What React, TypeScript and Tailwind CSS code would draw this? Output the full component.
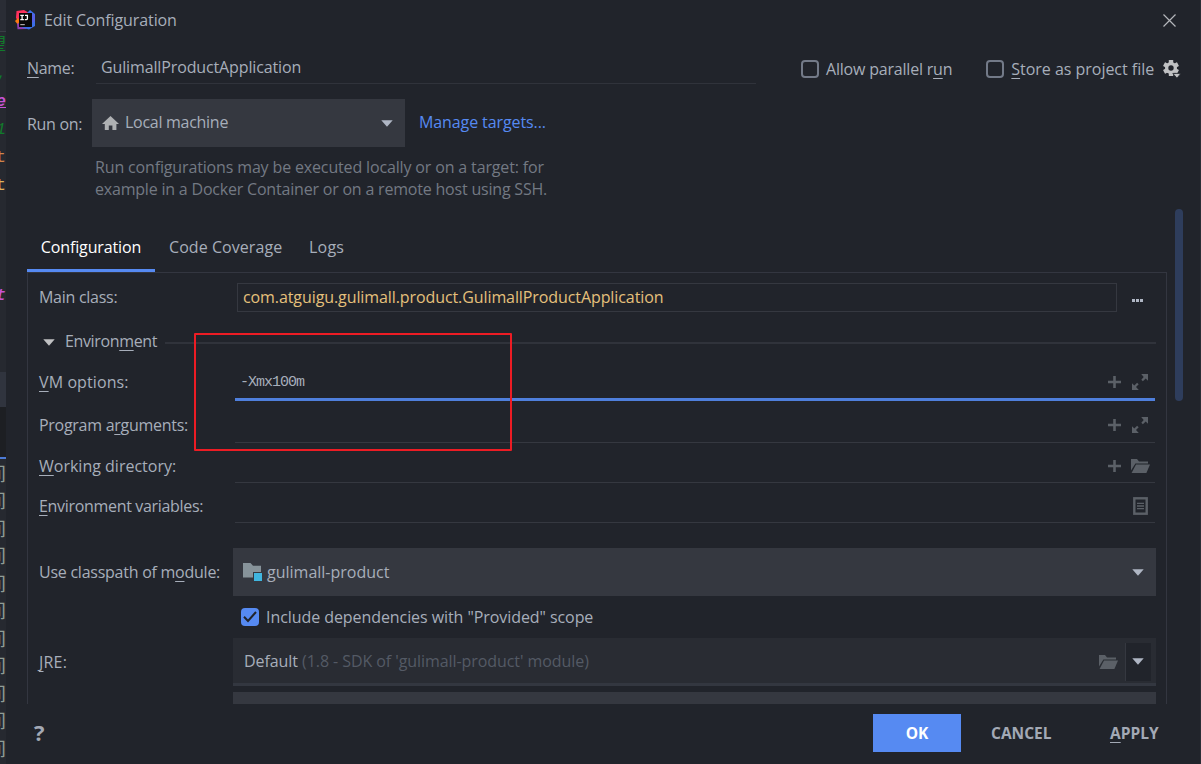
import type { ReactNode } from "react";

interface TextProps {
  text: string;
  className?: string;
}

/** Renders a label, underlining the character that follows the "&". */
function Mnemonic({ text, className = "" }: TextProps) {
  const at = text.indexOf("&");

  if (at < 0) {
    return <span className={`whitespace-pre ${className}`}>{text}</span>;
  }

  return (
    <span className={`whitespace-pre ${className}`}>
      {text.slice(0, at)}
      <span className="underline decoration-1 underline-offset-[3px] [text-decoration-skip-ink:none]">
        {text[at + 1]}
      </span>
      {text.slice(at + 2)}
    </span>
  );
}

function Logo() {
  return (
    <svg width="21" height="20" viewBox="0 0 21 20">
      <path d="M1.5 1 9 0l5 3-1 8H3L1 8z" fill="#fe315d" />
      <path d="m0 11 3-3 3 5-2.5 2.5z" fill="#f97a12" />
      <path d="m2 14 5-3 5 8-9.5.3z" fill="#8f3fae" />
      <path d="m12 3 3-3 5 4v12l-6 3.6-7-2 7-5z" fill="#3b6fe8" />
      <path d="M16 3l4 2v6l-4 3z" fill="#5560e4" />
      <rect x="4" y="3" width="13" height="14" fill="#090909" />
      <path
        d="M5.3 5.4h3.6M7.1 5.4v4.2M5.3 9.6h3.6M10 5.4h2.4v3q0 1.2-1.2 1.2h-1.4"
        stroke="#fff"
        strokeWidth="1.3"
        fill="none"
      />
      <path d="M5.3 14.6h4.5" stroke="#aaa" strokeWidth="1.2" />
    </svg>
  );
}

function CloseIcon() {
  return (
    <svg width="13" height="13" viewBox="0 0 13 13" stroke="#b4b6ba" strokeWidth="1.2">
      <path d="m.5.5 12 12M12.5.5l-12 12" />
    </svg>
  );
}

function HomeIcon() {
  return (
    <svg width="17" height="14" viewBox="0 0 17 14" fill="#afb1b3">
      <path d="M8.5 0 17 8h-2.6v6h-4V9.5H6.8V14h-4V8H0z" />
    </svg>
  );
}

function GearIcon() {
  return (
    <svg width="18" height="19" viewBox="0 0 18 19">
      <g fill="#c0c1c3">
        <rect x="5.8" y="0" width="4.4" height="16" rx=".6" />
        <rect x="5.8" y="0" width="4.4" height="16" rx=".6" transform="rotate(60 8 8)" />
        <rect x="5.8" y="0" width="4.4" height="16" rx=".6" transform="rotate(120 8 8)" />
        <circle cx="8" cy="8" r="6" />
      </g>
      <circle cx="8" cy="8" r="2.7" fill="#21242b" />
      <path d="M9.8 13.4h8L14 18.2z" fill="#c0c1c3" stroke="#21242b" strokeWidth=".8" />
    </svg>
  );
}

function Caret({ color = "#afb6c4" }: { color?: string }) {
  return (
    <svg width="12" height="7" viewBox="0 0 12 7" fill={color}>
      <path d="M.3.3h11.4L6 6.7z" />
    </svg>
  );
}

function PlusIcon() {
  return (
    <svg width="13" height="12" viewBox="0 0 13 12" fill="#5b6067">
      <path d="M5.2 0h2.6v4.7H13v2.6H7.8V12H5.2V7.3H0V4.7h5.2z" />
    </svg>
  );
}

function ExpandIcon() {
  return (
    <svg width="16" height="16" viewBox="0 0 16 16" fill="#5b6067">
      <path d="M9.2 0H16v6.8l-2.3-2.3-2.8 2.8-1.6-1.6 2.4-2.7zM6.8 16H0V9.2l2.3 2.3 2.8-2.8 1.6 1.6-2.7 2.7z" />
    </svg>
  );
}

function FolderOpenIcon() {
  return (
    <svg width="19" height="14" viewBox="0 0 19 14" fill="#5b6067">
      <path d="M0 0h6l2 2.4h9V4.6H4.4L0 11.5z" />
      <path d="M5 5.6h14L15.4 14H.6z" />
    </svg>
  );
}

function ListIcon() {
  return (
    <svg width="15" height="18" viewBox="0 0 15 18" fill="none" stroke="#5b6067">
      <rect x="1.3" y="1.3" width="12.4" height="15.4" strokeWidth="2.4" />
      <path d="M4 6.3h7M4 9h7M4 11.7h7" strokeWidth="1.3" />
    </svg>
  );
}

function ModuleIcon() {
  return (
    <svg width="20" height="18" viewBox="0 0 20 18">
      <path d="M0 0h7.5L10 2.7h8V9h-8v5.5H0z" fill="#87939a" />
      <rect x="11" y="10" width="8" height="8" fill="#40b6e0" />
    </svg>
  );
}

interface CheckProps {
  label: string;
  checked?: boolean;
  className?: string;
}

function Check({ label, checked = false, className = "" }: CheckProps) {
  return (
    <div className="flex items-center gap-[7px]">
      {checked ? (
        <span className="flex size-[18px] items-center justify-center rounded-sm bg-[#568af2]">
          <svg width="14" height="12" viewBox="0 0 14 12" fill="none" stroke="#21242b" strokeWidth="2">
            <path d="m1 5.8 4 4.2 8-9" />
          </svg>
        </span>
      ) : (
        <span className="size-[18px] rounded-sm border-2 border-[#737a88]" />
      )}
      <Mnemonic text={label} className={className} />
    </div>
  );
}

interface FieldProps {
  label: string;
  labelClass?: string;
  rowClass: string;
  focused?: boolean;
  value?: string;
  icons: ReactNode;
}

function FieldRow({ label, labelClass = "", rowClass, focused = false, value = "", icons }: FieldProps) {
  return (
    <div className={`flex ${rowClass}`}>
      <div className="flex w-[196px] shrink-0 items-center">
        <Mnemonic text={label} className={labelClass} />
      </div>
      <div
        className={`flex w-[920px] items-center justify-between pl-[5px] ${
          focused ? "border-b-[3px] border-[#4f7fdc] pt-0.5" : "border-b border-[#353840]"
        }`}
      >
        <span className="pt-0.5 font-['Liberation_Mono',monospace] text-[15px] tracking-[-1px]">
          {value}
        </span>
        <div className="flex items-center">{icons}</div>
      </div>
    </div>
  );
}

const editorRows = [
  { text: "望", style: "h-[28px] text-[#127a2b]" },
  { text: ",", style: "h-[28px] text-[#127a2b] font-bold" },
  { text: "e", style: "h-[28px] text-[#c653d6] font-bold italic underline" },
  { text: "1", style: "h-[28px] text-[#127a2b] italic" },
  { text: "t", style: "h-[28px] text-[#d0844a]" },
  { text: "t", style: "h-[28px] text-[#e0b35c]" },
  { text: "", style: "h-[82px]" },
  { text: "t", style: "h-[28px] text-[#c653d6] font-bold italic" },
];

/** The sliver of the editor that stays visible left of the dialog. */
function EditorEdge() {
  return (
    <div className="flex w-[6px] shrink-0 flex-col overflow-hidden bg-[#262930] font-['Liberation_Mono','Noto_Sans_CJK_SC',monospace] text-[17px]">
      <div className="h-8 shrink-0 border-b border-[#3a3d45] bg-[#2a2d35]" />
      {editorRows.map((row, i) => (
        <div key={i} className={`flex shrink-0 items-center justify-end ${row.style}`}>
          {row.text}
        </div>
      ))}
      <div className="h-[62px] shrink-0" />
      <div className="h-[35px] shrink-0 bg-[#30343e]" />
      <div className="h-[52px] shrink-0 border-b-2 border-[#4d7bd6] bg-[#1d1f23]" />
      <div className="h-[3px] shrink-0" />
      {Array.from({ length: 11 }, (_, i) => (
        <div key={i} className="flex h-[27.5px] shrink-0 items-center justify-end text-[19px] text-[#8f9c94]">
          间
        </div>
      ))}
    </div>
  );
}

function Header() {
  return (
    <>
      <div className="flex h-10 items-center justify-between pl-[9px] pr-6">
        <div className="flex items-center gap-2">
          <Logo />
          <span className="tracking-[-0.1px]">Edit Configuration</span>
        </div>
        <CloseIcon />
      </div>

      <div className="flex h-11 pl-[21px]">
        <div className="flex w-[69px] items-center pt-[11px]">
          <Mnemonic text="&Name:" className="tracking-[-0.3px]" />
        </div>
        <div className="flex w-[660px] items-center border-b border-[#30333b] pl-[5px] pt-[11px] tracking-[-0.13px]">
          GulimallProductApplication
        </div>
        <div className="ml-[45px] flex items-center gap-[34px] pt-[14px]">
          <Check label="Allow parallel r&un" className="tracking-[-0.2px]" />
          <Check label="&Store as project file" className="tracking-[-0.03px]" />
        </div>
        <div className="ml-[9px] flex items-center pt-[14px]">
          <GearIcon />
        </div>
      </div>

      <div className="mt-[15px] flex h-12 items-center pl-[21px]">
        <span className="w-[65px] pt-px tracking-[-0.3px]">Run on:</span>
        <div className="flex h-12 w-[313px] items-center bg-[#353840] pl-[10px] pr-3">
          <HomeIcon />
          <span className="ml-1.5 flex-1 pb-0.5 tracking-[-0.28px]">Local machine</span>
          <Caret />
        </div>
        <span className="ml-[14px] pb-0.5 tracking-[-0.1px] text-[#568af2]">Manage targets...</span>
      </div>

      <div className="mt-[9px] whitespace-pre pl-[89px] leading-[22px] text-[#737983]">
        <div className="tracking-[-0.15px]">
          Run configurations may be executed locally or on a target: for
        </div>
        <div className="tracking-[-0.2px]">
          example in a Docker Container or on a remote host using SSH.
        </div>
      </div>
    </>
  );
}

function Tabs() {
  return (
    <div className="mt-[17px] flex h-[47px] whitespace-nowrap">
      <div className="flex w-32 items-center justify-center border-b-[3px] border-[#568af2] tracking-[-0.12px] text-white">
        Configuration
      </div>
      <div className="ml-[14px] flex w-[113px] items-center pb-[3px] tracking-[0.06px]">
        Code Coverage
      </div>
      <div className="ml-[27px] flex items-center pb-[3px] tracking-[0.2px]">Logs</div>
    </div>
  );
}

function ConfigurationPanel() {
  return (
    <div className="relative h-[432px] w-[1140px] overflow-hidden border border-b-0 border-[#333640] pl-[11px]">
      <div className="mt-[10px] flex h-[29px] items-center">
        <span className="w-[198px] pb-px tracking-[-0.27px]">Main class:</span>
        <div className="flex h-[29px] w-[880px] items-center border border-[#353840] pb-0.5 pl-[5px] tracking-[-0.09px] text-[#e5c07b]">
          com.atguigu.gulimall.product.GulimallProductApplication
        </div>
        <div className="ml-[15px] flex gap-[1px] pt-[5px]">
          <span className="size-[3px] bg-[#afb6c4]" />
          <span className="size-[3px] bg-[#afb6c4]" />
          <span className="size-[3px] bg-[#afb6c4]" />
        </div>
      </div>

      <div className="mt-[15px] flex h-[30px] items-center pl-1">
        <Caret color="#c0c1c3" />
        <Mnemonic text="Environ&ment" className="ml-[10px] pb-0.5 tracking-[-0.36px]" />
        <span className="ml-[8px] mt-[2px] h-0.5 w-[991px] bg-[#30333b]" />
      </div>

      <FieldRow
        label="&VM options:"
        labelClass="pb-px tracking-[0.1px]"
        rowClass="mt-[7px] h-[37px]"
        focused
        value="-Xmx100m"
        icons={
          <div className="flex items-center gap-[11px] pr-[7px]">
            <PlusIcon />
            <ExpandIcon />
          </div>
        }
      />
      <FieldRow
        label="Program a&rguments:"
        labelClass="pb-[3px] tracking-[-0.28px]"
        rowClass="mt-[9px] h-[33px]"
        icons={
          <div className="flex items-center gap-[11px] pb-[3px] pr-[7px]">
            <PlusIcon />
            <ExpandIcon />
          </div>
        }
      />
      <FieldRow
        label="&Working directory:"
        labelClass="pb-px"
        rowClass="mt-[7px] h-[33px]"
        icons={
          <div className="flex items-center gap-[10px] pr-[5px]">
            <PlusIcon />
            <FolderOpenIcon />
          </div>
        }
      />
      <FieldRow
        label="&Environment variables:"
        labelClass="pb-px tracking-[-0.32px]"
        rowClass="mt-[7px] h-[33px]"
        icons={
          <div className="pr-[7px]">
            <ListIcon />
          </div>
        }
      />

      <div className="mt-[25px] flex h-12 items-center">
        <Mnemonic text="Use classpath of m&odule:" className="w-[194px] tracking-[-0.25px]" />
        <div className="flex h-12 w-[923px] items-center bg-[#353840] pl-[10px] pr-3">
          <ModuleIcon />
          <span className="ml-1 flex-1">gulimall-product</span>
          <Caret />
        </div>
      </div>

      <div className="flex h-[42px] items-center pl-[202px]">
        <Check
          label={'Include dependencies with "Provided" scope'}
          checked
          className="tracking-[-0.07px]"
        />
      </div>

      <div className="flex h-12 items-center">
        <Mnemonic text="&JRE:" className="w-[194px] tracking-[0.2px]" />
        <div className="flex h-12 w-[923px] items-center border-b-[3px] border-[#333740] bg-[#292c33] pl-[11px] pr-[5px]">
          <span className="flex-1 whitespace-pre tracking-[-0.07px]">
            Default <span className="text-[#545a65]">(1.8 - SDK of 'gulimall-product' module)</span>
          </span>
          <div className="pt-[2px]">
            <FolderOpenIcon />
          </div>
          <div className="ml-[7px] mt-0.5 flex h-[38px] w-[26px] items-center justify-center border-l border-[#353840] bg-[#21242b] pr-px">
            <Caret />
          </div>
        </div>
      </div>

      <div className="ml-[194px] mt-1.5 h-3 w-[923px] bg-[#353840]" />

      {/* highlight drawn over the VM options field */}
      <div className="absolute left-[166px] top-[60px] h-[118px] w-[318px] rounded-[1px] border-2 border-[#ed1c24]" />
    </div>
  );
}

function Footer() {
  return (
    <div className="flex h-[58px] items-center pl-7 pr-[41px] text-[15.5px] font-bold text-[#a3a9b5]">
      <span className="pb-0.5 text-[22px]">?</span>
      <div className="ml-auto flex h-[38px] w-[88px] items-center justify-center bg-[#568af2] pt-0.5 text-white">
        OK
      </div>
      <span className="ml-[30px] w-[61px] pt-0.5">CANCEL</span>
      <Mnemonic text="&APPLY" className="ml-[58px] w-[49px] pt-0.5" />
    </div>
  );
}

export default function App() {
  return (
    <div className="flex h-[764px] w-[1201px] overflow-hidden bg-[#21242b] font-['Open_Sans','Noto_Sans_CJK_SC',sans-serif] text-base text-[#a7aeba]">
      <EditorEdge />
      <div className="flex w-[1194px] shrink-0 flex-col">
        <Header />
        <div className="flex pl-[21px]">
          <div className="w-[1140px] shrink-0 pt-2">
            <Tabs />
            <ConfigurationPanel />
          </div>
          <div className="ml-2 mt-[9px] h-48 w-2 rounded-full bg-[#2e3d5c]" />
        </div>
        <Footer />
      </div>
      <div className="w-px bg-[#2b2e36]" />
    </div>
  );
}
